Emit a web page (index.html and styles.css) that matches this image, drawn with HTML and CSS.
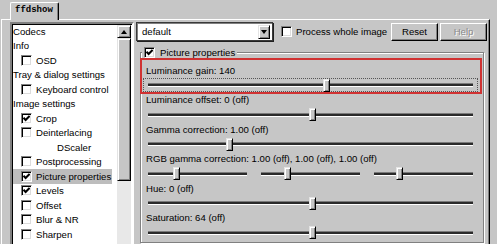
FILE: index.html
```html
<!DOCTYPE html>
<html lang="en">
<head>
    <meta charset="UTF-8">
    <meta name="viewport" content="width=device-width, initial-scale=1.0">
    <title>ffdshow</title>
    <link rel="stylesheet" href="styles.css">
</head>
<body>
    <div class="window">
        <div class="tabs">
            <div class="tab">ffdshow</div>
        </div>
        <div class="page">
            <div class="tree">
                <ul class="items">
                    <li class="item">Codecs</li>
                    <li class="item">Info</li>
                    <li class="item sub"><span class="cb"></span>OSD</li>
                    <li class="item">Tray &amp; dialog settings</li>
                    <li class="item sub"><span class="cb"></span>Keyboard control</li>
                    <li class="item">Image settings</li>
                    <li class="item sub"><span class="cb"><svg viewBox="0 0 7 7" width="7" height="7"><polyline points="0.5,2.8 2.6,4.9 6.6,0.9" /></svg></span>Crop</li>
                    <li class="item sub"><span class="cb"></span>Deinterlacing</li>
                    <li class="item deep">DScaler</li>
                    <li class="item sub"><span class="cb"></span>Postprocessing</li>
                    <li class="item sub selected"><span class="cb"><svg viewBox="0 0 7 7" width="7" height="7"><polyline points="0.5,2.8 2.6,4.9 6.6,0.9" /></svg></span>Picture properties</li>
                    <li class="item sub"><span class="cb"><svg viewBox="0 0 7 7" width="7" height="7"><polyline points="0.5,2.8 2.6,4.9 6.6,0.9" /></svg></span>Levels</li>
                    <li class="item sub"><span class="cb"></span>Offset</li>
                    <li class="item sub"><span class="cb"></span>Blur &amp; NR</li>
                    <li class="item sub"><span class="cb"></span>Sharpen</li>
                </ul>
                <div class="scrollbar">
                    <div class="sb-btn raised"><span class="arrow-up"></span></div>
                    <div class="sb-thumb raised"></div>
                </div>
            </div>

            <div class="main">
                <div class="toolbar">
                    <div class="combo">
                        <span class="combo-text">default</span>
                        <span class="combo-btn raised"><span class="arrow-down"></span></span>
                    </div>
                    <label class="check"><span class="cb"></span>Process whole image</label>
                    <div class="buttons">
                        <button class="btn">Reset</button>
                        <button class="btn" disabled>Help</button>
                    </div>
                </div>

                <fieldset class="group">
                    <legend><span class="legend-in"><span class="cb"><svg viewBox="0 0 7 7" width="7" height="7"><polyline points="0.5,2.8 2.6,4.9 6.6,0.9" /></svg></span>Picture properties</span></legend>

                    <div class="marked">
                        <div class="label">Luminance gain: 140</div>
                        <div class="slider focus">
                            <div class="track"><span class="thumb raised" style="left: 53.7%"></span></div>
                        </div>
                    </div>

                    <div class="row">
                        <div class="label">Luminance offset: 0 (off)</div>
                        <div class="slider">
                            <div class="track"><span class="thumb raised" style="left: 49.4%"></span></div>
                        </div>
                    </div>

                    <div class="row">
                        <div class="label">Gamma correction: 1.00 (off)</div>
                        <div class="slider">
                            <div class="track"><span class="thumb raised" style="left: 24.1%"></span></div>
                        </div>
                    </div>

                    <div class="row">
                        <div class="label">RGB gamma correction: 1.00 (off), 1.00 (off), 1.00 (off)</div>
                        <div class="slider triple">
                            <div class="track"><span class="thumb raised" style="left: 25.3%"></span></div>
                            <div class="track"><span class="thumb raised" style="left: 23.6%"></span></div>
                            <div class="track"><span class="thumb raised" style="left: 22%"></span></div>
                        </div>
                    </div>

                    <div class="row">
                        <div class="label">Hue: 0 (off)</div>
                        <div class="slider">
                            <div class="track"><span class="thumb raised" style="left: 49.4%"></span></div>
                        </div>
                    </div>

                    <div class="row">
                        <div class="label">Saturation: 64 (off)</div>
                        <div class="slider">
                            <div class="track"><span class="thumb raised" style="left: 49.4%"></span></div>
                        </div>
                    </div>
                </fieldset>
            </div>
        </div>
    </div>
</body>
</html>
```

FILE: styles.css
```css
* {
    box-sizing: border-box;
}
body {
    margin: 0;
    background-color: #c6c6c6;
    font-family: "Liberation Sans", Arial, sans-serif;
    font-size: 9.6px;
    color: #000;
    overflow: hidden;
}
.window {
    width: 497px;
    height: 244px;
    overflow: hidden;
}

/* 3d bits */
.raised {
    background-color: #c6c6c6;
    border: 1px solid;
    border-color: #e4e4e4 #000 #000 #e4e4e4;
    box-shadow: inset 1px 1px 0 #fff, inset -1px -1px 0 #808080;
}
.cb {
    flex: none;
    width: 11px;
    height: 11px;
    display: flex;
    align-items: center;
    justify-content: center;
    background-color: #fff;
    border: 1px solid;
    border-color: #808080 #fff #fff #808080;
    box-shadow: inset 1px 1px 0 #000, inset -1px -1px 0 #dcdcdc;
    margin-right: 4px;
}
.cb svg {
    display: block;
    fill: none;
    stroke: #000;
    stroke-width: 2.1;
}

/* tab */
.tabs {
    height: 19px;
    display: flex;
    align-items: flex-end;
    padding-left: 10px;
}
.tab {
    position: relative;
    z-index: 1;
    height: 18px;
    margin-bottom: -1px;
    padding: 0 5px 3px 4px;
    background-color: #c6c6c6;
    border-top: 1px solid #fff;
    border-left: 1px solid #fff;
    border-right: 1px solid #000;
    border-radius: 2px 2px 0 0;
    box-shadow: inset -1px 0 0 #808080;
    font-family: "Liberation Mono", monospace;
    font-weight: bold;
    font-size: 9px;
    line-height: 14px;
}

/* page */
.page {
    display: flex;
    align-items: flex-start;
    gap: 2px;
    height: 240px;
    margin: 0 7px 0 1px;
    padding: 2px 2px 0 8px;
    border-top: 1px solid #fff;
    border-left: 1px solid #fff;
    border-right: 1px solid #000;
    box-shadow: inset -1px 0 0 #808080;
}

/* tree */
.tree {
    flex: none;
    display: flex;
    width: 124px;
    height: 236px;
    background-color: #fff;
    border: 2px solid;
    border-color: #808080 #fff #fff #808080;
    box-shadow: inset 1px 1px 0 #000;
}
.items {
    flex: 1;
    list-style: none;
    margin: 0;
    padding: 0 0 0 1px;
}
.item {
    display: flex;
    align-items: center;
    width: fit-content;
    height: 14.5px;
    white-space: nowrap;
}
.item.sub {
    padding-left: 8px;
}
.item.deep {
    padding-left: 44px;
}
.item.selected {
    background-color: #bdbdbd;
    padding-right: 1px;
}
.scrollbar {
    flex: none;
    width: 14px;
    margin: 1px 1px 0 0;
    display: flex;
    flex-direction: column;
    background-color: #e8e8e8;
}
.sb-btn {
    height: 13px;
    display: flex;
    align-items: center;
    justify-content: center;
}
.sb-thumb {
    height: 143px;
}
.arrow-up {
    width: 0;
    height: 0;
    border-left: 3.5px solid transparent;
    border-right: 3.5px solid transparent;
    border-bottom: 4px solid #000;
}
.arrow-down {
    width: 0;
    height: 0;
    border-left: 3.5px solid transparent;
    border-right: 3.5px solid transparent;
    border-top: 4px solid #000;
}

/* right side */
.main {
    flex: 1;
    min-width: 0;
    display: flex;
    flex-direction: column;
}
.toolbar {
    display: flex;
    align-items: center;
    height: 19px;
}
.combo {
    flex: none;
    display: flex;
    align-items: center;
    width: 137px;
    height: 19px;
    background-color: #fff;
    border: 1px solid #3a3a3a;
    box-shadow: 1px 1px 0 #202020, inset 1px 1px 0 #808080;
}
.combo-text {
    flex: 1;
    padding-left: 5px;
}
.combo-btn {
    width: 12px;
    height: 14px;
    margin-right: 2px;
    display: flex;
    align-items: center;
    justify-content: center;
}
.check {
    display: flex;
    align-items: center;
    margin-left: 8px;
    white-space: nowrap;
}
.check .cb {
    margin-right: 4px;
}
.buttons {
    margin-left: auto;
    display: flex;
    gap: 2px;
}
.btn {
    width: 47px;
    height: 18px;
    padding: 0;
    font: inherit;
    color: #000;
    background-color: #c6c6c6;
    border: 1px solid;
    border-color: #fff #000 #000 #fff;
    box-shadow: inset -1px -1px 0 #808080;
}
.btn:disabled {
    color: #8a8a8a;
    text-shadow: 1px 1px 0 #fff;
}

/* group */
.group {
    min-width: 0;
    margin: 5px 3px 0 4px;
    padding: 0;
    border: 1px solid #808080;
    box-shadow: inset 1px 1px 0 #fff, 1px 1px 0 #fff;
}
.group legend {
    margin-left: 1px;
    padding: 0 2px;
    background-color: #c6c6c6;
}
.legend-in {
    display: flex;
    align-items: center;
    height: 12px;
}
.legend-in .cb {
    margin-right: 5px;
}
.marked {
    margin: 0 1px 0 -1px;
    padding-top: 4.5px;
    border: 2px solid #d03232;
}
.marked .label {
    padding-left: 4px;
}
.label {
    line-height: 12px;
    padding-left: 5px;
    white-space: nowrap;
}
.slider {
    display: flex;
    align-items: center;
    height: 17.5px;
    padding: 0 10px 0 7px;
}
.slider.focus {
    height: 14px;
    margin: 1.5px 2px 0 1px;
    padding: 0 4px;
    border: 1px dotted #555;
}
.slider.triple {
    display: grid;
    grid-template-columns: repeat(3, 1fr);
    column-gap: 14px;
    align-items: center;
}
.track {
    position: relative;
    flex: 1;
    height: 4px;
    background-color: #2a2a2a;
    border-top: 1px solid #7a7a7a;
    border-bottom: 1px solid #fff;
}
.thumb {
    position: absolute;
    top: -5.5px;
    width: 7px;
    height: 13px;
}
```
